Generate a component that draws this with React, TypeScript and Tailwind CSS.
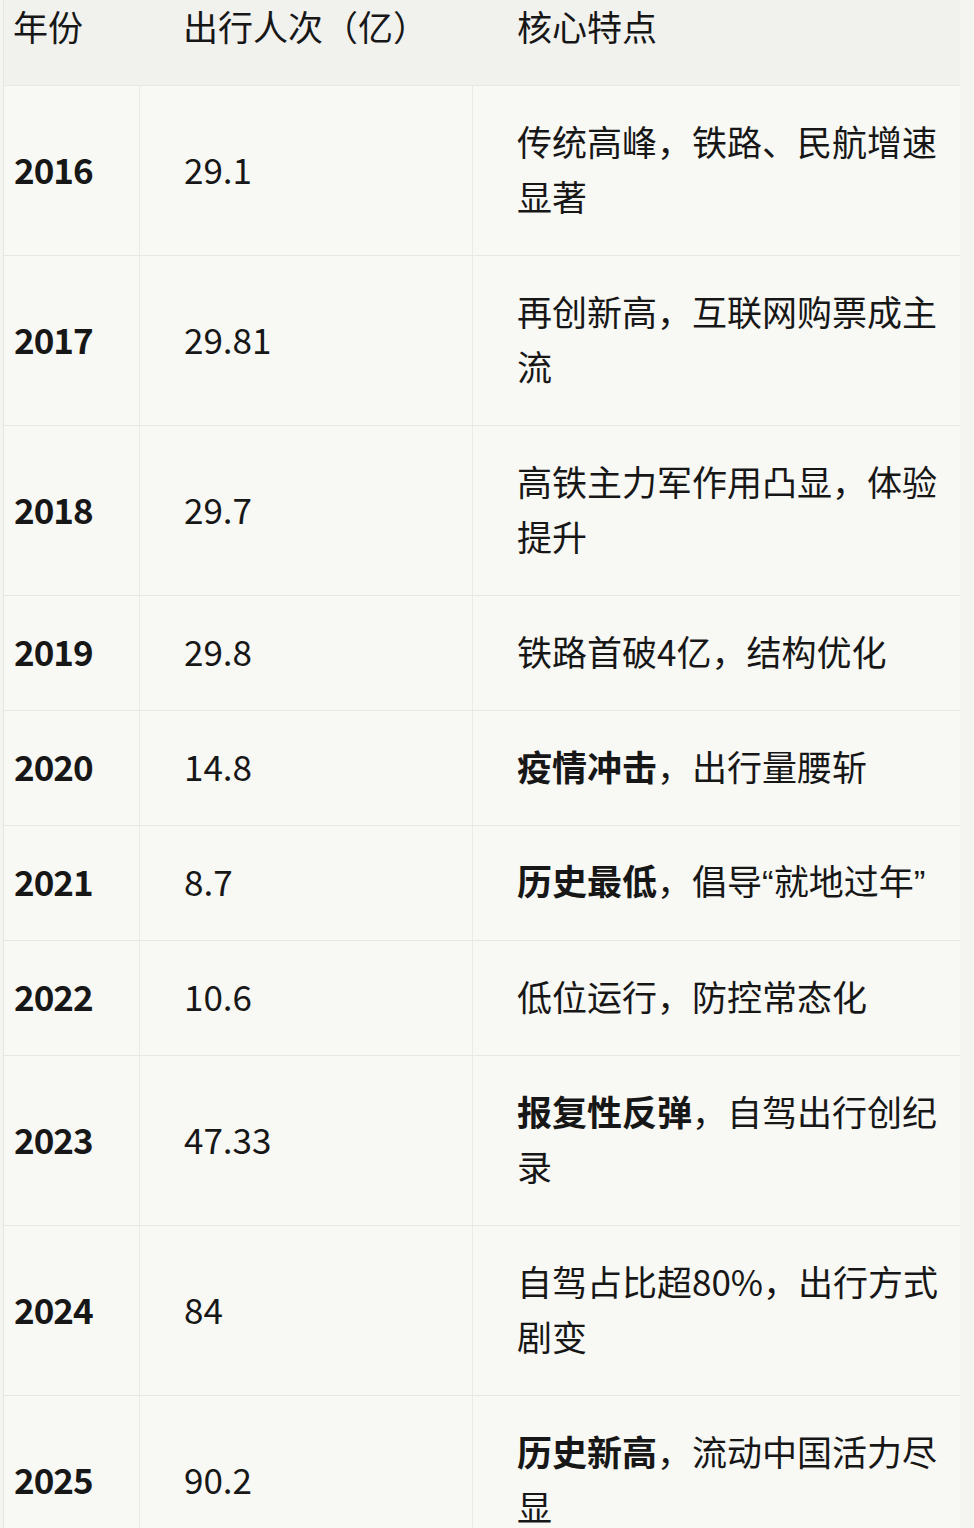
import React from 'react';

type Row = {
  year: string;
  count: string;
  bold?: string;
  rest: React.ReactNode;
  tall: boolean;
};

const Q = ({ children }: { children: React.ReactNode }) => (
  <span className="font-['Liberation_Sans',sans-serif]">{children}</span>
);

const rows: Row[] = [
  { year: '2016', count: '29.1', rest: '传统高峰，铁路、民航增速显著', tall: true },
  { year: '2017', count: '29.81', rest: '再创新高，互联网购票成主流', tall: true },
  { year: '2018', count: '29.7', rest: '高铁主力军作用凸显，体验提升', tall: true },
  { year: '2019', count: '29.8', rest: '铁路首破4亿，结构优化', tall: false },
  { year: '2020', count: '14.8', bold: '疫情冲击', rest: '，出行量腰斩', tall: false },
  {
    year: '2021',
    count: '8.7',
    bold: '历史最低',
    rest: (
      <>
        ，倡导<Q>“</Q>就地过年<Q>”</Q>
      </>
    ),
    tall: false,
  },
  { year: '2022', count: '10.6', rest: '低位运行，防控常态化', tall: false },
  { year: '2023', count: '47.33', bold: '报复性反弹', rest: '，自驾出行创纪录', tall: true },
  { year: '2024', count: '84', rest: '自驾占比超80%，出行方式剧变', tall: true },
  { year: '2025', count: '90.2', bold: '历史新高', rest: '，流动中国活力尽显', tall: true },
];

export default function App() {
  return (
    <div className="min-h-screen overflow-hidden bg-[#f4f4f1] font-['Noto_Sans_CJK_SC','Noto_Sans',sans-serif] text-[35px] leading-[55px] text-[#171717]">
      <div className="ml-[3px] w-[957px] border-l border-[#e6e6e1]">
        {/* Header */}
        <div className="grid h-[86px] grid-cols-[136px_333px_488px] border-b border-[#e8e8e3] bg-[#f1f1ee] leading-[52px]">
          <div className="pl-[9px]">年份</div>
          <div className="pl-[43px]">出行人次（亿）</div>
          <div className="pl-[44px]">核心特点</div>
        </div>

        {rows.map((r) => (
          <div
            key={r.year}
            className={`grid grid-cols-[136px_333px_488px] border-b border-[#e9e9e4] bg-[#f8f8f4] ${
              r.tall ? 'h-[170px]' : 'h-[115px]'
            }`}
          >
            <div className="flex items-center border-r border-[#ebebe6] pb-[5px] pl-[10px] font-bold tracking-[-1px]">
              {r.year}
            </div>
            <div className="flex items-center border-r border-[#ebebe6] pb-[5px] pl-[44px]">{r.count}</div>
            <div className="flex items-center pb-[5px] pl-[44px] pr-[8px]">
              <p>
                {r.bold && <span className="font-bold">{r.bold}</span>}
                {r.rest}
              </p>
            </div>
          </div>
        ))}
      </div>
    </div>
  );
}
